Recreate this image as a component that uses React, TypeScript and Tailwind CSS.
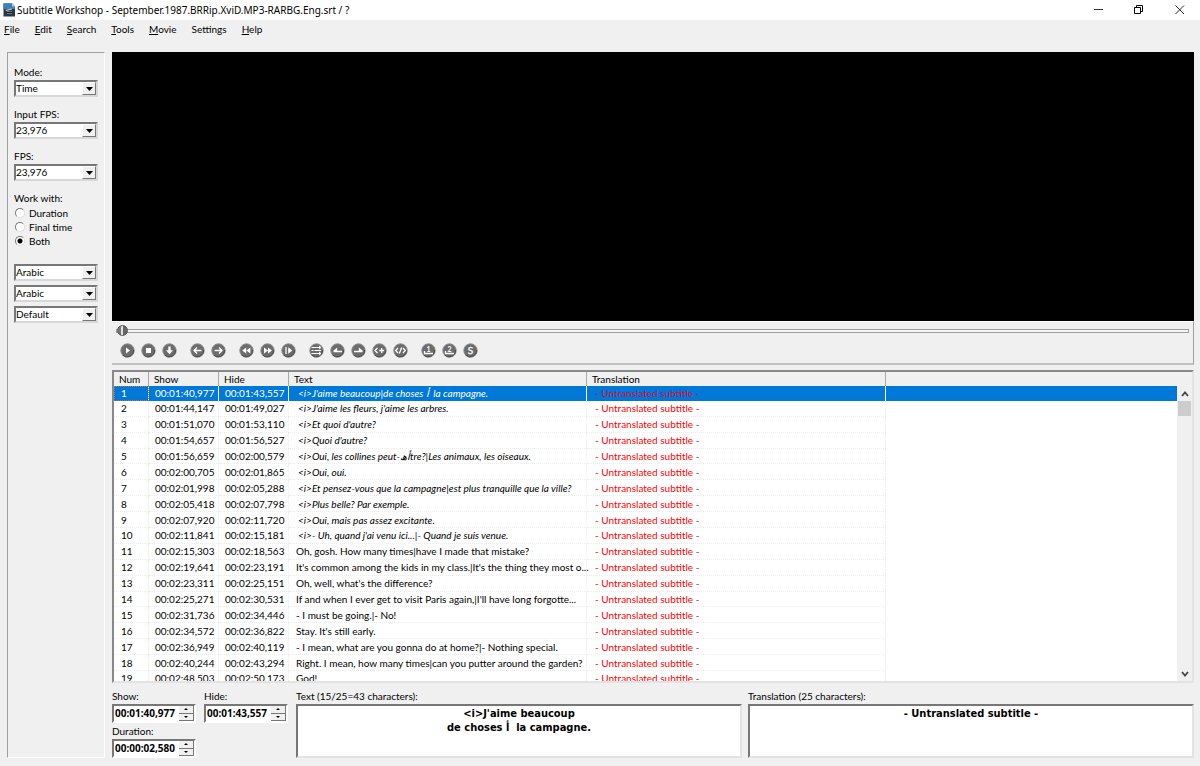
import { useState, type ReactNode } from 'react';

interface Subtitle {
  show: string;
  hide: string;
  text: string;
}

const UNTRANSLATED = '- Untranslated subtitle -';

const menuItems = [
  { before: '', key: 'F', after: 'ile' },
  { before: '', key: 'E', after: 'dit' },
  { before: '', key: 'S', after: 'earch' },
  { before: '', key: 'T', after: 'ools' },
  { before: '', key: 'M', after: 'ovie' },
  { before: 'Sett', key: 'i', after: 'ngs' },
  { before: '', key: 'H', after: 'elp' },
];

const subtitles: Subtitle[] = [
  { show: '00:01:40,977', hide: '00:01:43,557', text: "<i>J'aime beaucoup|de choses أ\u00a0 la campagne." },
  { show: '00:01:44,147', hide: '00:01:49,027', text: "<i>J'aime les fleurs, j'aime les arbres." },
  { show: '00:01:51,070', hide: '00:01:53,110', text: "<i>Et quoi d'autre?" },
  { show: '00:01:54,657', hide: '00:01:56,527', text: "<i>Quoi d'autre?" },
  { show: '00:01:56,659', hide: '00:02:00,579', text: '<i>Oui, les collines peut-أھtre?|Les animaux, les oiseaux.' },
  { show: '00:02:00,705', hide: '00:02:01,865', text: '<i>Oui, oui.' },
  { show: '00:02:01,998', hide: '00:02:05,288', text: '<i>Et pensez-vous que la campagne|est plus tranquille que la ville?' },
  { show: '00:02:05,418', hide: '00:02:07,798', text: '<i>Plus belle? Par exemple.' },
  { show: '00:02:07,920', hide: '00:02:11,720', text: '<i>Oui, mais pas assez excitante.' },
  { show: '00:02:11,841', hide: '00:02:15,181', text: "<i>- Uh, quand j'ai venu ici...|- Quand je suis venue." },
  { show: '00:02:15,303', hide: '00:02:18,563', text: 'Oh, gosh. How many times|have I made that mistake?' },
  { show: '00:02:19,641', hide: '00:02:23,191', text: "It's common among the kids in my class.|It's the thing they most o..." },
  { show: '00:02:23,311', hide: '00:02:25,151', text: "Oh, well, what's the difference?" },
  { show: '00:02:25,271', hide: '00:02:30,531', text: "If and when I ever get to visit Paris again,|I'll have long forgotte..." },
  { show: '00:02:31,736', hide: '00:02:34,446', text: '- I must be going.|- No!' },
  { show: '00:02:34,572', hide: '00:02:36,822', text: "Stay. It's still early." },
  { show: '00:02:36,949', hide: '00:02:40,119', text: '- I mean, what are you gonna do at home?|- Nothing special.' },
  { show: '00:02:40,244', hide: '00:02:43,294', text: 'Right. I mean, how many times|can you putter around the garden?' },
  { show: '00:02:48,503', hide: '00:02:50,173', text: 'God!' },
];

const arrowLeft = <path d="M11.5 7.5H4M7 4.5l-3 3 3 3" />;
const arrowRight = <path d="M3.5 7.5H11M8 4.5l3 3-3 3" />;

// Player buttons, grouped the way they sit on the toolbar
const playerGroups: { label: string; icon: ReactNode }[][] = [
  [
    { label: 'Play', icon: <path d="M6 4.5v6l4-3z" fill="white" stroke="none" /> },
    { label: 'Stop', icon: <rect x="5" y="5" width="5" height="5" fill="white" stroke="none" /> },
    { label: 'Scroll list', icon: <path d="M6.3 3.5h2.4v3.7H11l-3.5 4-3.5-4h2.3z" fill="white" stroke="none" /> },
  ],
  [
    { label: 'Previous subtitle', icon: arrowLeft },
    { label: 'Next subtitle', icon: arrowRight },
  ],
  [
    { label: 'Rewind', icon: <path d="M7.2 4.5v6l-4-3zM11.4 4.5v6l-4-3z" fill="white" stroke="none" /> },
    { label: 'Forward', icon: <path d="M4 4.5v6l4-3zM8 4.5v6l4-3z" fill="white" stroke="none" /> },
    {
      label: 'Playback rate',
      icon: (
        <>
          <path d="M5 4v7" />
          <path d="M7.2 4.2v6.6l4-3.3z" fill="white" stroke="none" />
        </>
      ),
    },
  ],
  [
    { label: 'Move subtitle', icon: <path d="M2.5 4.5H11M2.5 7.5h2M2.5 10.5H11M5.5 7.5H12M10 3l2 1.5L10 6M10 9l2 1.5-2 1.5" strokeWidth="1" /> },
    { label: 'Set start time', icon: <path d="M3.5 8.5H12M3.5 8.5l3-2.5v2.5" fill="white" /> },
    { label: 'Set final time', icon: <path d="M3 8.5h8.5M11.5 8.5l-3-2.5v2.5" fill="white" /> },
    { label: 'Start subtitle', icon: <path d="M5.5 5L3 7.5 5.5 10M7.2 7.5h5M9.7 5v5" /> },
    { label: 'End subtitle', icon: <path d="M5 5L2.7 7.5 5 10M10 5l2.3 2.5L10 10M8.7 4.5l-2.4 6" /> },
  ],
  [
    { label: 'First sync point', icon: <SyncPoint digit="1" /> },
    { label: 'Last sync point', icon: <SyncPoint digit="2" /> },
    {
      label: 'Add sync point',
      icon: (
        <text x="7.5" y="11" textAnchor="middle" fontSize="10" fill="white" stroke="white" strokeWidth=".3">
          S
        </text>
      ),
    },
  ],
];

function SyncPoint({ digit }: { digit: string }) {
  return (
    <>
      <text x="7.5" y="8.5" textAnchor="middle" fontSize="7" fontWeight="bold" fill="white" stroke="none">
        {digit}
      </text>
      <path d="M3.5 8v2.5h8.5" />
    </>
  );
}

function AppIcon() {
  return (
    <svg width="13" height="14" viewBox="0 0 13 14" aria-hidden="true">
      <path d="M.5.5H9l3 3v10H.5z" fill="#27394a" />
      <path d="M.5.5H9l3 3V6H.5z" fill="#3f7fb5" />
      <path d="M9 .5l3 3H9z" fill="#9ed0f5" />
      <path d="M2.5 7l6-1.500.5 1-6 1.500z" fill="#c9d4dc" />
      <rect x="4" y="8" width="5" height="3" fill="#6f7c86" />
      <path d="M4 9.5h5" stroke="#16202a" />
    </svg>
  );
}

function RoundButton({ label, children }: { label: string; children: ReactNode }) {
  return (
    <button type="button" aria-label={label} className="size-[15px]">
      <svg width="15" height="15" viewBox="0 0 15 15" fill="none" stroke="white" strokeWidth="1.3">
        <circle cx="7.5" cy="7.5" r="6.7" fill="#6c6c6c" stroke="#8c8c8c" strokeWidth="1" />
        <path d="M2.5 12a6.5 6.5 0 0 0 11-5" stroke="#4c4c4c" strokeWidth="1" />
        {children}
      </svg>
    </button>
  );
}

function Combo({ id, label, options, hideLabel }: { id: string; label: string; options: string[]; hideLabel?: boolean }) {
  return (
    <div>
      {!hideLabel && (
        <label htmlFor={id} className="block leading-4">
          {label}
        </label>
      )}
      <div className="relative h-[17px] w-[84px] border-2 border-t-[#777] border-r-[#d8d8d8] border-b-[#d8d8d8] border-l-[#777] bg-white">
        <select
          id={id}
          aria-label={hideLabel ? label : undefined}
          className="block h-[13px] w-full appearance-none leading-[13px] outline-none"
        >
          {options.map((option) => (
            <option key={option}>{option}</option>
          ))}
        </select>
        <span className="pointer-events-none absolute inset-y-0 right-0 flex w-[14px] items-center justify-center border border-t-white border-r-[#777] border-b-[#777] border-l-white bg-[#f0f0f0]">
          <svg width="7" height="4" viewBox="0 0 7 4" aria-hidden="true">
            <path d="M0 0h7L3.5 4z" fill="black" />
          </svg>
        </span>
      </div>
    </div>
  );
}

function TimeField({ id, label, value }: { id: string; label: string; value: string }) {
  return (
    <div className="w-[84px]">
      <label htmlFor={id} className="block leading-4">
        {label}
      </label>
      <div className="flex h-[19px] border-2 border-t-[#777] border-r-white border-b-white border-l-[#777] bg-white">
        <input
          id={id}
          defaultValue={value}
          className="min-w-0 flex-1 pl-px font-['Noto_Sans','DejaVu_Sans',sans-serif] leading-[15px] font-bold outline-none"
        />
        <div className="flex w-[15px] flex-col bg-[#f0f0f0]">
          <button type="button" aria-label={`${label} up`} className="flex flex-1 items-center justify-center border-r border-b border-[#777]">
            <svg width="4" height="2" viewBox="0 0 4 2"><path d="M0 2h4L2 0z" /></svg>
          </button>
          <button type="button" aria-label={`${label} down`} className="flex flex-1 items-center justify-center border-r border-b border-[#777]">
            <svg width="4" height="2" viewBox="0 0 4 2"><path d="M0 0h4L2 2z" /></svg>
          </button>
        </div>
      </div>
    </div>
  );
}

function Memo({ id, label, value }: { id: string; label: string; value: string }) {
  return (
    <div className="flex min-w-0 flex-1 flex-col">
      <label htmlFor={id} className="leading-4">
        {label}
      </label>
      <textarea
        id={id}
        defaultValue={value}
        className="min-h-0 w-full flex-1 resize-none border-2 border-t-[#777] border-r-[#e3e3e3] border-b-[#e3e3e3] border-l-[#777] bg-white pt-px text-center font-['DejaVu_Sans_Condensed','DejaVu_Sans',sans-serif] text-[11px] leading-[14px] font-bold outline-none"
      />
    </div>
  );
}

function Sidebar() {
  const [workWith, setWorkWith] = useState('Both');

  return (
    <aside className="w-[98px] shrink-0 border border-t-[#a0a0a0] border-r-white border-b-white border-l-[#a0a0a0] pt-[11px] pl-[6px]">
      <div className="flex flex-col gap-[9px]">
        <Combo id="mode" label="Mode:" options={['Time', 'Frames']} />
        <Combo id="input-fps" label="Input FPS:" options={['23,976', '25', '29,97']} />
        <Combo id="fps" label="FPS:" options={['23,976', '25', '29,97']} />
        <fieldset>
          <legend className="leading-4">Work with:</legend>
          {['Duration', 'Final time', 'Both'].map((option) => (
            <label key={option} className="flex h-[14px] items-center gap-1 pl-px">
              <input
                type="radio"
                name="work-with"
                checked={workWith === option}
                onChange={() => setWorkWith(option)}
                className="size-[10px] appearance-none rounded-full border border-t-[#777] border-r-[#ddd] border-b-[#ddd] border-l-[#777] bg-white checked:bg-[radial-gradient(circle,black_2px,white_3px)]"
              />
              {option}
            </label>
          ))}
        </fieldset>
      </div>
      <div className="mt-4 flex flex-col gap-1">
        <Combo id="original-charset" label="Original charset" options={['Arabic', 'Default']} hideLabel />
        <Combo id="translation-charset" label="Translation charset" options={['Arabic', 'Default']} hideLabel />
        <Combo id="style" label="Style" options={['Default', 'Arabic']} hideLabel />
      </div>
    </aside>
  );
}

function SubtitleTable() {
  const [selected, setSelected] = useState(0);
  const headers = ['Num', 'Show', 'Hide', 'Text', 'Translation', ''];

  return (
    <div className="flex h-[313px] overflow-hidden border-2 border-t-[#888] border-r-[#e3e3e3] border-b-[#e3e3e3] border-l-[#888] bg-white">
      <div className="min-w-0 flex-1 overflow-hidden">
        <table className="h-[315px] w-full table-fixed border-separate border-spacing-0 text-left whitespace-nowrap">
          <colgroup>
            <col className="w-[35px]" />
            <col className="w-[70px]" />
            <col className="w-[70px]" />
            <col className="w-[298px]" />
            <col className="w-[299px]" />
            <col />
          </colgroup>
          <thead>
            <tr className="bg-[#f0f0f0]">
              {headers.map((header, i) => (
                <th
                  key={i}
                  className="border-r border-[#a8a8a8] p-0 pl-[5px] leading-[14px] font-normal last:border-0"
                >
                  {header}
                </th>
              ))}
            </tr>
          </thead>
          <tbody>
            {subtitles.map((subtitle, i) => {
              const active = i === selected;
              const cell = active
                ? 'border-r border-white p-0 leading-[14px]'
                : 'border-r border-b border-dotted border-[#ececec] p-0 pt-px leading-[13px]';

              return (
                <tr key={subtitle.show} onClick={() => setSelected(i)} className={active ? 'bg-[#0078d7] text-white' : ''}>
                  <td className={`${cell} pl-[7px] ${active ? 'outline outline-dotted -outline-offset-1 outline-[#b07a50]' : ''}`}>{i + 1}</td>
                  <td className={`${cell} pl-[6px]`}>{subtitle.show}</td>
                  <td className={`${cell} pl-[6px]`}>{subtitle.hide}</td>
                  <td className={`${cell} ${subtitle.text.startsWith('<i>') ? 'pl-[9px] italic' : 'pl-[7px]'}`}>
                    {subtitle.text}
                  </td>
                  <td className={`${cell} pl-2 ${active ? 'text-[#d0103a]' : 'text-[#ff0000]'}`}>{UNTRANSLATED}</td>
                  <td className="p-0" />
                </tr>
              );
            })}
          </tbody>
        </table>
      </div>
      {/* Scrollbar */}
      <div className="flex w-[15px] shrink-0 flex-col bg-[#f0f0f0] pt-[14px]">
        <button type="button" aria-label="Scroll up" className="flex h-[15px] items-center justify-center">
          <svg width="8" height="6" viewBox="0 0 8 6" fill="none" stroke="#444" strokeWidth="1.8">
            <path d="M1 5l3-3.5L7 5" />
          </svg>
        </button>
        <div className="ml-px h-[15px] w-[13px] bg-[#cdcdcd]" />
        <div className="flex-1" />
        <button type="button" aria-label="Scroll down" className="flex h-[15px] items-center justify-center">
          <svg width="8" height="6" viewBox="0 0 8 6" fill="none" stroke="#444" strokeWidth="1.8">
            <path d="M1 1l3 3.5L7 1" />
          </svg>
        </button>
      </div>
    </div>
  );
}

export default function App() {
  return (
    <div className="flex min-h-screen flex-col bg-[#f0f0f0] font-['Lato','DejaVu_Sans',sans-serif] text-[10px] text-black">
      {/* Title bar */}
      <header className="flex h-5 items-center bg-white pl-[3px]">
        <AppIcon />
        <h1 className="ml-px flex-1 truncate font-['Noto_Sans','DejaVu_Sans',sans-serif] leading-5">
          Subtitle Workshop - September.1987.BRRip.XviD.MP3-RARBG.Eng.srt / ?
        </h1>
        <div className="flex">
          <button type="button" aria-label="Minimize" className="flex h-5 w-10 items-center justify-center">
            <svg width="10" height="10" viewBox="0 0 10 10" fill="none" stroke="#333"><path d="M0 4.5h9" /></svg>
          </button>
          <button type="button" aria-label="Restore" className="flex h-5 w-10 items-center justify-center">
            <svg width="10" height="10" viewBox="0 0 10 10" fill="none" stroke="black">
              <path d="M.5 2.5h6v6h-6zM2.5 2.5v-2h6v6h-2" />
            </svg>
          </button>
          <button type="button" aria-label="Close" className="flex h-5 w-[41px] items-center justify-center">
            <svg width="10" height="10" viewBox="0 0 10 10" fill="none" stroke="#222"><path d="M.5.5l8.5 8.5M9 .5L.5 9" /></svg>
          </button>
        </div>
      </header>

      {/* Menu */}
      <nav className="flex h-8 items-start gap-[15px] pl-1">
        {menuItems.map((item) => (
          <button key={item.key} type="button" className="leading-[18px]">
            {item.before}
            <span className="underline">{item.key}</span>
            {item.after}
          </button>
        ))}
      </nav>

      <div className="flex flex-1 gap-[7px] pr-[6px] pb-2 pl-[7px]">
        <Sidebar />

        <main className="flex min-w-0 flex-1 flex-col">
          <div className="min-h-[120px] flex-1 bg-black" />

          {/* Player controls */}
          <div className="mb-[5px] h-11 border-t border-r border-b-2 border-t-white border-r-[#a0a0a0] border-b-[#c0c0c0] px-1 pt-[3px]">
            <input
              type="range"
              aria-label="Position"
              defaultValue={0}
              className="block h-3 w-full appearance-none bg-transparent [&::-webkit-slider-runnable-track]:h-1 [&::-webkit-slider-runnable-track]:border [&::-webkit-slider-runnable-track]:border-[#a09c9c] [&::-webkit-slider-runnable-track]:bg-[#f4f4f4] [&::-webkit-slider-thumb]:-mt-[5px] [&::-webkit-slider-thumb]:size-[11px] [&::-webkit-slider-thumb]:appearance-none [&::-webkit-slider-thumb]:rounded-full [&::-webkit-slider-thumb]:border [&::-webkit-slider-thumb]:border-[#555] [&::-webkit-slider-thumb]:bg-[linear-gradient(90deg,#777_3px,#ddd_3px,#ddd_5px,#666_5px)]"
            />
            <div className="flex gap-[13px] pt-[6px] pl-1">
              {playerGroups.map((group) => (
                <div key={group[0].label} className="flex gap-[6px]">
                  {group.map((button) => (
                    <RoundButton key={button.label} label={button.label}>
                      {button.icon}
                    </RoundButton>
                  ))}
                </div>
              ))}
            </div>
          </div>

          <SubtitleTable />

          {/* Editor */}
          <div className="flex pt-[5px]">
            <div className="grid w-[184px] shrink-0 grid-cols-2">
              <TimeField id="show" label="Show:" value="00:01:40,977" />
              <TimeField id="hide" label="Hide:" value="00:01:43,557" />
              <TimeField id="duration" label="Duration:" value="00:00:02,580" />
            </div>
            <div className="flex min-w-0 flex-1 gap-[6px]">
              <Memo
                id="text"
                label="Text (15/25=43 characters):"
                value={"<i>J'aime beaucoup\nde choses أ\u00a0 la campagne."}
              />
              <Memo id="translation" label="Translation (25 characters):" value={UNTRANSLATED} />
            </div>
          </div>
        </main>
      </div>
    </div>
  );
}
